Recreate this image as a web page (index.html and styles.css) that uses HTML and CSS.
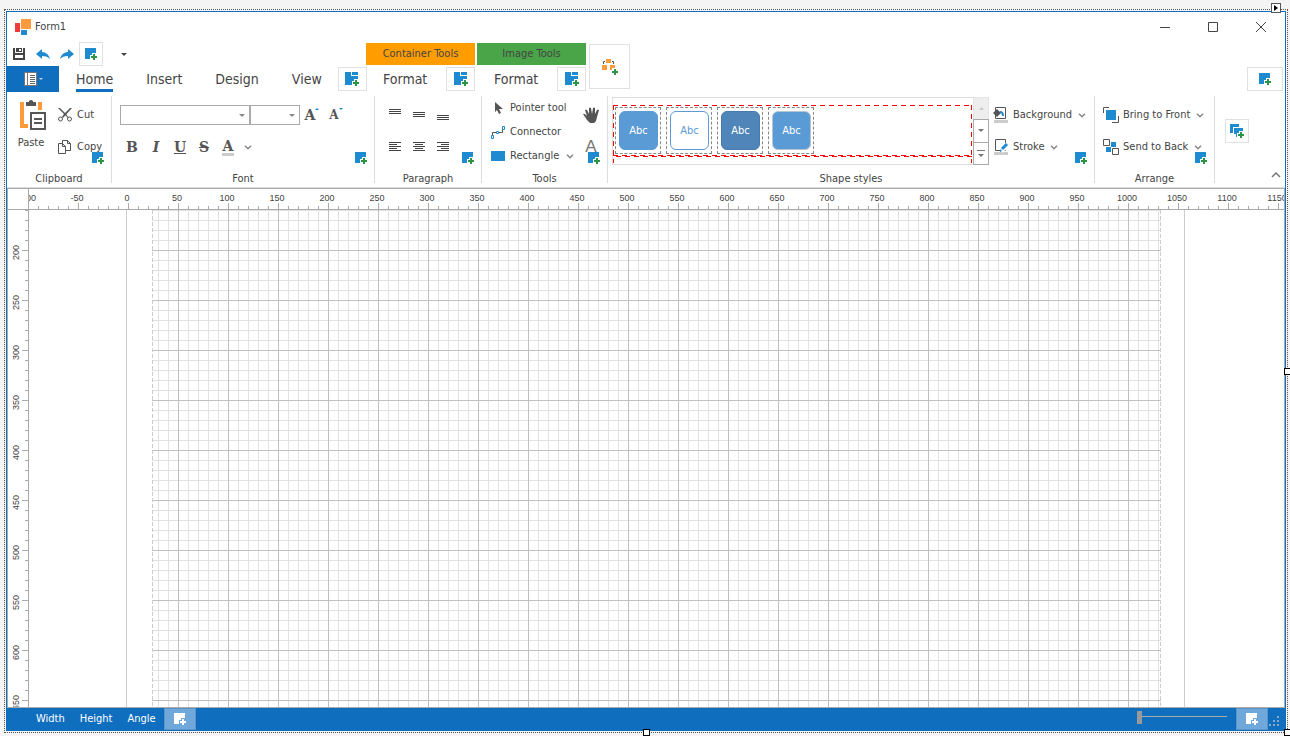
FILE: index.html
```html
<!DOCTYPE html>
<html lang="en">
<head>
<meta charset="utf-8">
<title>Form1</title>
<link rel="stylesheet" href="styles.css">
</head>
<body>
<svg class="defs" aria-hidden="true">
  <symbol id="add" viewBox="0 0 12 12"><path class="blue" d="M0 0h11v5H7v2H5v4H0z"/><path class="green" d="M8 6h2v2h2v2h-2v2H8v-2H6V8h2z"/></symbol>
  <symbol id="add-page" viewBox="0 0 14 14"><path class="blue" d="M0 0h6v4h7v3H9v2H7v4H0zM7 0h6v3H7z"/><path class="green" d="M10 8h2v2h2v2h-2v2h-2v-2H8v-2h2z"/></symbol>
  <symbol id="add-group" viewBox="0 0 14 14"><path class="blue" d="M0 0h9v3H3v6H0zM4 4h9v3H9v2H7v4H6V10H4z"/><path class="green" d="M10 8h2v2h2v2h-2v2h-2v-2H8v-2h2z"/></symbol>
  <symbol id="chev" viewBox="0 0 8 5"><path d="M1 .7l3 3 3-3" fill="none" stroke="#888" stroke-width="1.500"/></symbol>
  <symbol id="tri" viewBox="0 0 6 3"><path d="M0 0h6L3 3z" fill="currentColor"/></symbol>
</svg>
<div class="designer">
  <div class="window">
    <header class="titlebar">
      <svg class="logo" width="16" height="16" viewBox="0 0 16 16"><path fill="#ee3b3b" d="M0 4h5v9H0z"/><path fill="#fd9a3c" d="M6 0h10v10H6z"/><path fill="#1e8ad0" d="M6 11h6v5H6z"/></svg>
      <span class="title">Form1</span>
      <button class="sys" aria-label="Minimize"><svg width="10" height="10"><path d="M0 5.500h10"/></svg></button>
      <button class="sys" aria-label="Maximize"><svg width="10" height="10"><path d="M.500.500h9v9h-9z"/></svg></button>
      <button class="sys" aria-label="Close"><svg width="10" height="10"><path d="M0 0l10 10M10 0L0 10"/></svg></button>
    </header>

    <div class="tabarea">
      <div class="qat">
        <button class="qbtn" aria-label="Save"><svg width="12" height="12" viewBox="0 0 12 12"><path fill="#444" fill-rule="evenodd" d="M0 0h2v5h8V0h2v12H0zM3 0h6v4H3zM6 1v2h2V1zM2 7v3h8V7z"/></svg></button>
        <button class="qbtn" aria-label="Undo"><svg width="14" height="11" viewBox="0 0 14 11"><path class="blue" d="M0 5l6-5v3c4 0 7 3 8 7-2-2-4-3-8-3v3z"/></svg></button>
        <button class="qbtn" aria-label="Redo"><svg width="14" height="11" viewBox="0 0 14 11"><path class="blue" d="M14 5L8 0v3C4 3 1 6 0 10c2-2 4-3 8-3v3z"/></svg></button>
        <button class="addbtn square" aria-label="Add toolbar item"><svg width="12" height="12"><use href="#add"/></svg></button>
        <button class="qmore" aria-label="Customize toolbar"><svg width="6" height="3"><use href="#tri"/></svg></button>
      </div>
      <nav class="tabs">
        <button class="file" aria-label="File"><svg width="13" height="14" viewBox="0 0 13 14"><path fill="#777" d="M0 0h13v14H0z"/><path fill="#fff" d="M1 1h2v12H1zM4 1h8v12H4z"/><path stroke="#666" d="M6 3.500h5M6 5.500h5M6 7.500h5M6 9.500h5M6 11.500h5"/></svg><svg width="4" height="2" viewBox="0 0 6 3"><use href="#tri"/></svg></button>
        <button class="tab active"><span>Home</span></button>
        <button class="tab"><span>Insert</span></button>
        <button class="tab"><span>Design</span></button>
        <button class="tab"><span>View</span></button>
        <button class="addbtn page" aria-label="Add page"><svg width="14" height="14"><use href="#add-page"/></svg></button>
      </nav>
      <div class="ctxtitle orange">Container Tools</div>
      <div class="ctxtabs"><button class="tab"><span>Format</span></button><button class="addbtn page" aria-label="Add container page"><svg width="14" height="14"><use href="#add-page"/></svg></button></div>
      <div class="ctxtitle greenbg">Image Tools</div>
      <div class="ctxtabs"><button class="tab"><span>Format</span></button><button class="addbtn page" aria-label="Add image page"><svg width="14" height="14"><use href="#add-page"/></svg></button></div>
      <button class="addbtn category" aria-label="Add page category"><svg width="16" height="16" viewBox="0 0 16 16"><path fill="#fd9a3c" d="M4 0h5v4H4zM0 6h5v5H0zM8 6h5v3h-3v2H8z"/><path fill="none" stroke="#555" d="M1.500 5V2.500H3M10 2.500h1.500V5"/><path class="green" d="M12 10h2v2h2v2h-2v2h-2v-2h-2v-2h2z"/></svg></button>
      <button class="addbtn header" aria-label="Add header item"><svg width="12" height="12"><use href="#add"/></svg></button>
    </div>

    <section class="ribbon">
      <div class="group clipboard">
        <div class="content">
          <button class="paste"><svg width="30" height="30" viewBox="-4 0 30 30"><path fill="#fd9a3c" d="M0 2h4v22h4v4H0zM18 2h4v8h-4z"/><path fill="#555" d="M6 2h3V1q2-2 4 0v1h3v4H6z"/><path fill="#fff" stroke="#555" stroke-width="2" d="M11 13h14v16H11z"/><path stroke="#555" stroke-width="2" d="M14 19h8M14 23h8"/></svg><span>Paste</span></button>
          <div class="stack wide">
            <button class="cmd"><svg width="14" height="14" viewBox="0 0 14 14"><path fill="#555" d="M0 0l2 0 5 5 5-5h2L5 10 4 9l2-3z"/><path fill="#555" d="M7 7l1-1 3 4-1 0z"/><g fill="none" stroke="#555"><circle cx="2.500" cy="11" r="2"/><circle cx="11.500" cy="11" r="2"/></g></svg>Cut</button>
            <button class="cmd"><svg width="14" height="14" viewBox="0 0 14 14"><g fill="#fff" stroke="#555"><path d="M4.500.500h5l3 3v7h-8z"/><path d="M.500 3.500h4l3 3v7h-7z"/><path fill="none" d="M4.500 3.500v3h3M9.500.500v3h3"/></g></svg>Copy</button>
          </div>
        </div>
        <div class="label">Clipboard</div>
        <button class="badge" aria-label="Add clipboard item"><svg width="12" height="12"><use href="#add"/></svg></button>
      </div>

      <div class="group font">
        <div class="content column">
          <div class="row">
            <div class="combos">
              <div class="combo family"><select aria-label="Font family"><option></option></select><svg width="6" height="3"><use href="#tri"/></svg></div>
              <div class="combo size"><select aria-label="Font size"><option></option></select><svg width="6" height="3"><use href="#tri"/></svg></div>
            </div>
            <button class="letter grow" aria-label="Grow font"><b>A</b><svg width="4" height="2" viewBox="0 0 4 2"><path class="blue" d="M2 0l2 2H0z"/></svg></button>
            <button class="letter grow small" aria-label="Shrink font"><b>A</b><svg width="4" height="2" viewBox="0 0 4 2"><path class="blue" d="M0 0h4L2 2z"/></svg></button>
          </div>
          <div class="row">
            <button class="letter"><b>B</b></button>
            <button class="letter"><i>I</i></button>
            <button class="letter"><u>U</u></button>
            <button class="letter"><s>S</s></button>
            <button class="letter"><b class="color">A</b></button>
            <button class="drop" aria-label="Font color menu"><svg width="8" height="5"><use href="#chev"/></svg></button>
          </div>
        </div>
        <div class="label">Font</div>
        <button class="badge" aria-label="Add font item"><svg width="12" height="12"><use href="#add"/></svg></button>
      </div>

      <div class="group paragraph">
        <div class="content column">
          <div class="row">
            <button class="letter" aria-label="Align top"><svg width="12" height="12"><path d="M0 .500h12M0 2.500h12M0 4.500h12"/></svg></button>
            <button class="letter" aria-label="Align middle"><svg width="12" height="12"><path d="M0 3.500h12M0 5.500h12M0 7.500h12"/></svg></button>
            <button class="letter" aria-label="Align bottom"><svg width="12" height="12"><path d="M0 6.500h12M0 8.500h12M0 10.500h12"/></svg></button>
          </div>
          <div class="row">
            <button class="letter" aria-label="Align left"><svg width="12" height="10"><path d="M0 .500h12M0 2.500h8M0 4.500h12M0 6.500h8M0 8.500h12"/></svg></button>
            <button class="letter" aria-label="Align center"><svg width="12" height="10"><path d="M0 .500h12M2 2.500h8M0 4.500h12M2 6.500h8M0 8.500h12"/></svg></button>
            <button class="letter" aria-label="Align right"><svg width="12" height="10"><path d="M0 .500h12M4 2.500h8M0 4.500h12M4 6.500h8M0 8.500h12"/></svg></button>
          </div>
        </div>
        <div class="label">Paragraph</div>
        <button class="badge" aria-label="Add paragraph item"><svg width="12" height="12"><use href="#add"/></svg></button>
      </div>

      <div class="group tools">
        <div class="content">
          <div class="stack tight">
            <button class="cmd"><svg width="14" height="12" viewBox="0 0 14 12"><path fill="#555" d="M4 0l8 7-4 0 2 4-2 1-2-4-2 2z"/></svg>Pointer tool</button>
            <button class="cmd"><svg width="14" height="13" viewBox="0 0 14 13"><path fill="none" stroke="#555" d="M1.500 9V6.500h10V3"/><g fill="#fff" stroke="#1e8ad0"><path d="M.500 9.500h2v3h-2zM11.500.500h2v3h-2zM5.500 5.500h2v2h-2z"/></g></svg>Connector</button>
            <button class="cmd"><svg width="14" height="10"><path class="blue" d="M0 0h14v10H0z"/></svg>Rectangle<svg class="arrow" width="8" height="5"><use href="#chev"/></svg></button>
          </div>
          <div class="stack wide icons">
            <button aria-label="Pan"><svg width="16" height="16" viewBox="0 0 16 16"><path fill="#555" d="M0 7q1-1 3 1l1 1-2-6q1-1 2 0l2 4V1q1-1 2 0l1 6 1-6q1-1 2 0v6l2-4q1-1 2 0l-2 7-1 4-2 2H7l-3-3-2-3z"/></svg></button>
            <button class="textbtn" aria-label="Text">A</button>
          </div>
        </div>
        <div class="label">Tools</div>
        <button class="badge" aria-label="Add tool"><svg width="12" height="12"><use href="#add"/></svg></button>
      </div>

      <div class="group styles">
        <div class="content">
          <div class="gallery">
            <div class="items">
              <div class="cell"><button class="shape">Abc</button></div>
              <div class="cell"><button class="shape outline">Abc</button></div>
              <div class="cell"><button class="shape dark">Abc</button></div>
              <div class="cell"><button class="shape light">Abc</button></div>
            </div>
            <div class="scroll">
              <button aria-label="Scroll up" disabled><svg width="5" height="3" viewBox="0 0 6 3"><path fill="#c4c4c4" d="M0 3h6L3 0z"/></svg></button>
              <button aria-label="Scroll down"><svg width="6" height="3"><use href="#tri"/></svg></button>
              <button aria-label="Open gallery"><svg width="8" height="7"><path fill="#777" d="M0 0h8v1H0zM1 4h6L4 7z"/></svg></button>
            </div>
          </div>
          <div class="stack wide">
            <button class="cmd"><svg width="16" height="16" viewBox="0 0 16 16"><path fill="#fff" stroke="#555" d="M2.500.500h10v11h-10z"/><path fill="#555" d="M0 6l4-4 4 4-4 4z"/><path fill="none" stroke="#1e8ad0" stroke-width="2" d="M7 5q3 0 3 4"/><path fill="#ccc" d="M1 13h14v3H1z"/></svg>Background<svg class="arrow" width="8" height="5"><use href="#chev"/></svg></button>
            <button class="cmd"><svg width="16" height="16" viewBox="0 0 16 16"><path fill="#fff" stroke="#555" d="M2.500.500h10v11h-10z"/><path fill="#ccc" d="M1 13h14v3H1z"/><path fill="none" stroke="#fff" stroke-width="5" d="M8 12l7-7"/><path fill="none" stroke="#1e8ad0" stroke-width="3" d="M9 10l5-5"/><path class="blue" d="M7 13v-3l2 2z"/></svg>Stroke<svg class="arrow" width="8" height="5"><use href="#chev"/></svg></button>
          </div>
        </div>
        <div class="label">Shape styles</div>
        <button class="badge" aria-label="Add style item"><svg width="12" height="12"><use href="#add"/></svg></button>
      </div>

      <div class="group arrange">
        <div class="content">
          <div class="stack wide">
            <button class="cmd"><svg width="16" height="16" viewBox="0 0 16 16"><path fill="none" stroke="#555" d="M.500 6V.500H6M9 15.500h6.500V9"/><path class="blue" d="M3 3h10v10H3z"/></svg>Bring to Front<svg class="arrow" width="8" height="5"><use href="#chev"/></svg></button>
            <button class="cmd"><svg width="16" height="16" viewBox="0 0 16 16"><path class="blue" d="M8 3h5v5H8zM3 8h5v5H3z"/><path fill="#fff" stroke="#555" d="M.500.500h6v6h-6zM9.500 9.500h6v6h-6z"/></svg>Send to Back<svg class="arrow" width="8" height="5"><use href="#chev"/></svg></button>
          </div>
        </div>
        <div class="label">Arrange</div>
        <button class="badge" aria-label="Add arrange item"><svg width="12" height="12"><use href="#add"/></svg></button>
      </div>

      <div class="tail">
        <button class="addbtn square" aria-label="Add group"><svg width="14" height="14"><use href="#add-group"/></svg></button>
        <button class="collapse" aria-label="Collapse ribbon"><svg width="10" height="6"><path d="M1 5l4-4 4 4" fill="none" stroke="#777" stroke-width="1.500"/></svg></button>
      </div>
    </section>

    <main class="diagram">
      <div class="corner"></div>
      <div class="ruler-x">
        <span>-100</span><span>-50</span><span>0</span><span>50</span><span>100</span><span>150</span><span>200</span><span>250</span><span>300</span><span>350</span><span>400</span><span>450</span><span>500</span><span>550</span><span>600</span><span>650</span><span>700</span><span>750</span><span>800</span><span>850</span><span>900</span><span>950</span><span>1000</span><span>1050</span><span>1100</span><span>1150</span>
      </div>
      <div class="ruler-y">
        <span>200</span><span>250</span><span>300</span><span>350</span><span>400</span><span>450</span><span>500</span><span>550</span><span>600</span><span>650</span>
      </div>
      <div class="canvas"><div class="sheet"><div class="grid"></div></div></div>
    </main>

    <footer class="status">
      <span>Width</span><span>Height</span><span>Angle</span>
      <button class="statusadd" aria-label="Add status item"><svg width="12" height="12"><use href="#add"/></svg></button>
      <input class="zoom" type="range" min="0" max="100" value="0" aria-label="Zoom">
      <button class="statusadd" aria-label="Add right status item"><svg width="12" height="12"><use href="#add"/></svg></button>
      <svg class="grip" width="10" height="10"><path fill="#8aa9c8" d="M8 0h2v2H8zM4 4h2v2H4zM8 4h2v2H8zM0 8h2v2H0zM4 8h2v2H4zM8 8h2v2H8z"/></svg>
    </footer>
  </div>
  <button class="smart" aria-label="Form tasks"><svg width="4" height="6"><path d="M0 0l4 3-4 3z"/></svg></button>
  <i class="handle right"></i><i class="handle bottom"></i><i class="handle both"></i>
</div>
</body>
</html>
```
FILE: styles.css
```css
* { box-sizing: border-box; }
body {
  margin: 0;
  height: 100vh;
  padding: 9px 2px 3px 4px;
  display: flex;
  background: #f4f4f4;
  color: #444;
  font: 11px/14px "DejaVu Sans Condensed", "DejaVu Sans", sans-serif;
  overflow: hidden;
}
button {
  margin: 0;
  padding: 0;
  border: 0;
  background: none;
  color: inherit;
  font: inherit;
  display: flex;
  align-items: center;
  justify-content: center;
}
svg { display: block; flex: none; }
.defs { position: absolute; width: 0; height: 0; }
.blue { fill: var(--icon, #1e8ad0); }
.green { fill: var(--icon, #2c9447); }

.designer {
  position: relative;
  flex: 1;
  min-width: 0;
  display: flex;
  border: 1px dotted #555;
  padding: 1px;
}
.window {
  flex: 1;
  min-width: 0;
  display: flex;
  flex-direction: column;
  border: 1px solid #106ebe;
  background: #fff;
}

.titlebar { display: flex; align-items: center; height: 30px; padding-left: 8px; }
.title { flex: 1; margin-left: 4px; }
.sys { width: 48px; height: 30px; }
.sys svg { fill: none; stroke: #444; }

.tabarea {
  display: grid;
  grid-template-rows: 24px 26px;
  grid-template-columns: 357px 109px 109px auto 1fr;
  column-gap: 2px;
  grid-auto-flow: column;
}
.qat { display: flex; align-items: center; }
.qbtn { width: 24px; height: 24px; }
.addbtn { flex: none; border: 1px solid #e0e0e0; background: #fff; }
.square { width: 24px; height: 24px; }
.qmore { width: 42px; height: 24px; color: #444; }
.tabs, .ctxtabs { display: flex; }
.file { flex: none; width: 52px; background: #106ebe; color: #ccc; gap: 2px; }
.tab { flex: none; padding: 0 16px 0 17px; font-size: 14px; align-items: stretch; }
.tab span { border-bottom: 3px solid transparent; padding-top: 4px; line-height: 19px; }
.tab.active span { border-color: #106ebe; }
.page { width: 29px; height: 24px; margin-top: 1px; margin-left: auto; }
.ctxtitle { margin: 1px 0; display: flex; align-items: center; justify-content: center; }
.orange { background: #ff9c00; }
.greenbg { background: #4aa548; }
.category { grid-row: 1 / 3; width: 41px; height: 45px; margin: 2px 0 0 1px; }
.tabs .page { margin-right: 1px; }
.header { grid-row: 2; grid-column: 5; justify-self: end; width: 36px; height: 24px; margin: 1px 2px 0 0; }

.ribbon { display: flex; height: 96px; padding: 4px 0; border-bottom: 1px solid #ddd; }
.group {
  position: relative;
  display: flex;
  flex-direction: column;
  border-right: 1px solid #ddd;
}
.content { flex: 1; display: flex; }
.column { flex-direction: column; padding-top: 7px; gap: 8px; }
.label { text-align: center; line-height: 8px; }
.badge { position: absolute; right: 7px; bottom: 19px; }
.clipboard { width: 105px; }
.font { width: 263px; }
.paragraph { width: 107px; }
.tools { width: 126px; }
.styles { width: 487px; }
.arrange { width: 120px; }
.paste { flex-direction: column; justify-content: flex-start; gap: 6px; width: 48px; padding-top: 4px; }
.stack { display: flex; flex-direction: column; }
.wide { gap: 8px; padding-top: 7px; }
.wide > button { height: 24px; }
.tight > button { height: 24px; }
.cmd { justify-content: flex-start; gap: 5px; white-space: nowrap; }
.clipboard .cmd { padding-left: 3px; }
.arrow { margin-left: 2px; }
.row { display: flex; align-items: center; height: 24px; padding-left: 8px; }
.combos { display: flex; }
.combo { position: relative; display: flex; }
.combo select {
  appearance: none;
  width: 100%;
  height: 20px;
  border: 1px solid #aaa;
  border-radius: 0;
  background: #fff;
}
.combo svg { position: absolute; right: 5px; top: 9px; color: #888; pointer-events: none; }
.family { width: 130px; }
.size { width: 50px; }
.letter { width: 24px; height: 24px; font: bold 14px/18px "DejaVu Serif", serif; color: #555; }
.letter svg { stroke: #444; }
.letter.grow svg { stroke: none; align-self: flex-start; margin-top: 5px; }
.small { font-size: 12px; }
.color { border-bottom: 3px solid #ccc; line-height: 14px; padding: 0 1px; }
.drop { width: 16px; height: 24px; }
.tools .content { padding-left: 9px; justify-content: space-between; }
.icons { padding-right: 8px; }
.textbtn { font: 17px/20px "Liberation Sans", sans-serif; color: #777; }

.styles .content { padding-left: 4px; gap: 4px; }
.styles .cmd { gap: 4px; }
.gallery { display: flex; width: 377px; height: 68px; margin-top: 1px; border: 1px solid #ddd; }
.items {
  flex: 1;
  display: flex;
  gap: 5px;
  height: 58px;
  margin: 7px 1px 0 0;
  padding: 2px;
  background:
    repeating-linear-gradient(90deg, #f00 0 5px, transparent 5px 9px) 0 0 / 100% 1px no-repeat,
    repeating-linear-gradient(90deg, #f00 0 5px, transparent 5px 9px) 0 50px / 100% 1px no-repeat,
    repeating-linear-gradient(90deg, transparent 0 3px, #f00 3px 8px, transparent 8px 9px) 0 51px / 100% 1px no-repeat,
    repeating-linear-gradient(#f00 0 5px, transparent 5px 9px) 0 0 / 1px 100% no-repeat,
    repeating-linear-gradient(#f00 0 5px, transparent 5px 9px) 100% 0 / 1px 100% no-repeat;
}
.cell { width: 46px; height: 47px; padding: 3px; border: 1px dashed #888; }
.shape { width: 39px; height: 39px; border: 1px solid #5b9bd5; border-radius: 6px; background: #5b9bd5; color: #fff; }
.outline { background: #fff; color: #5b9bd5; }
.dark { background: #4f85b8; border-color: #477ab0; }
.light { border-color: #b8c4d0; }
.scroll { display: flex; flex-direction: column; width: 16px; margin: -1px -1px 0 0; }
.scroll button { flex: 1; border: 1px solid #aaa; margin-bottom: -1px; color: #777; }
.scroll button:disabled { background: #eee; border-color: #e4e4e4; }
.arrange .content { padding-left: 8px; }
.arrange .cmd { gap: 4px; }
.tail { flex: 1; display: flex; justify-content: space-between; padding-left: 10px; }
.tail .square { margin-top: 23px; }
.collapse { align-self: flex-end; width: 18px; height: 16px; }

.diagram {
  flex: 1;
  min-height: 0;
  display: grid;
  grid-template-columns: 22px minmax(0, 1fr);
  grid-template-rows: 21px minmax(0, 1fr);
  border: 1px solid #aaa;
  border-width: 1px 1px 1px 0;
  font: 9px/14px "Liberation Sans", Arial, sans-serif;
}
.corner { border: 1px solid #aaa; border-width: 0 1px 1px 1px; }
.ruler-x {
  display: flex;
  overflow: hidden;
  border-bottom: 1px solid #aaa;
  background:
    repeating-linear-gradient(90deg, transparent 0 49px, #aaa 49px 50px) 0 100% / 100% 6px no-repeat,
    repeating-linear-gradient(90deg, transparent 0 9px, #aaa 9px 10px) 0 100% / 100% 3px no-repeat;
}
.ruler-x span { flex: none; width: 50px; line-height: 18px; text-align: center; }
.ruler-x span:first-child { margin-left: -27px; }
.ruler-y {
  overflow: hidden;
  padding-top: 17px;
  border: 1px solid #aaa;
  border-width: 0 1px;
  background:
    repeating-linear-gradient(transparent 0 40px, #aaa 40px 41px, transparent 41px 50px) 100% 0 / 6px 100% no-repeat,
    repeating-linear-gradient(#aaa 0 1px, transparent 1px 10px) 100% 0 / 3px 100% no-repeat;
}
.ruler-y span { display: block; writing-mode: vertical-rl; transform: rotate(180deg); height: 50px; width: 16px; line-height: 16px; text-align: center; }
.canvas { overflow: hidden; display: flex; justify-content: center; padding-right: 3px; }
.sheet { flex: none; width: 1059px; padding: 0 23px 0 25px; border: 1px solid #ccc; border-width: 0 1px; }
.grid {
  height: 100%;
  background:
    repeating-linear-gradient(#ccc 0 4px, transparent 4px 6px) 0 0 / 1px 100% no-repeat,
    repeating-linear-gradient(#ccc 0 4px, transparent 4px 6px) 100% 0 / 1px 100% no-repeat,
    linear-gradient(90deg, #c0c0c0 1px, transparent 1px) 26px 0 / 50px 50px,
    linear-gradient(#c0c0c0 1px, transparent 1px) 0 40px / 50px 50px,
    linear-gradient(90deg, #e2e2e2 1px, transparent 1px) 6px 0 / 10px 10px,
    linear-gradient(#e2e2e2 1px, transparent 1px) 0 0 / 10px 10px;
}

.status { display: flex; align-items: center; height: 22px; padding-left: 29px; background: #106ebe; color: #fff; }
.status span { margin-right: 15px; }
.statusadd { --icon: #fff; width: 32px; height: 22px; background: #70a8dc; border: 1px solid #5a94c4; }
.status span + .statusadd { margin-left: -7px; }
.zoom { appearance: none; width: 90px; height: 15px; margin: 0 9px 3px auto; background: linear-gradient(#aaa, #aaa) 0 6px / 100% 1px no-repeat; }
.zoom::-webkit-slider-thumb { appearance: none; width: 5px; height: 13px; background: #999; }
.grip { margin: 4px 6px 0 1px; }

.smart { position: absolute; top: -7px; right: 6px; width: 10px; height: 10px; border: 1px solid #555; background: #fff; }
.handle { position: absolute; width: 7px; height: 7px; border: 1px solid #000; background: #fff; }
.right { right: -4px; top: 50%; margin-top: -3px; }
.bottom { left: 50%; bottom: -4px; margin-left: -3px; }
.both { right: -4px; bottom: -4px; }
```
